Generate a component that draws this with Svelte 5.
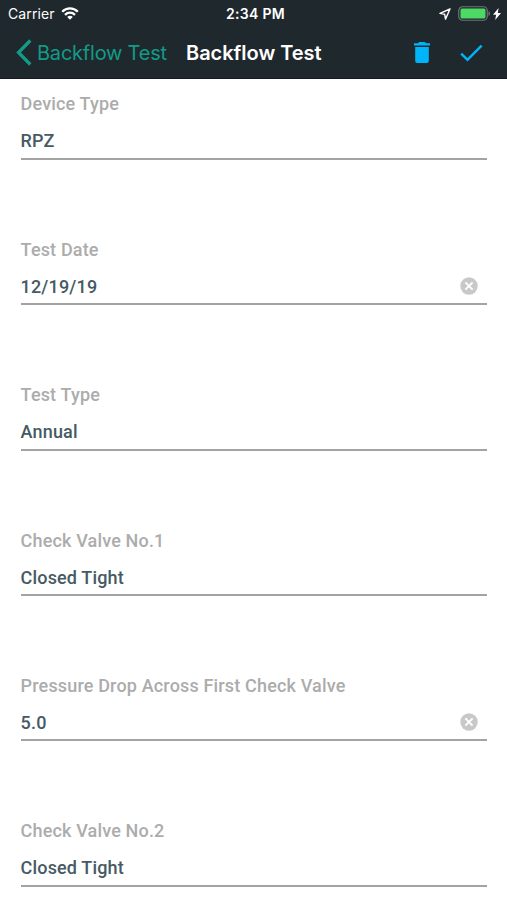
<script>
  const fields = [
    { label: 'Device Type', value: 'RPZ' },
    { label: 'Test Date', value: '12/19/19', clearable: true },
    { label: 'Test Type', value: 'Annual' },
    { label: 'Check Valve No.1', value: 'Closed Tight' },
    { label: 'Pressure Drop Across First Check Valve', value: '5.0', clearable: true },
    { label: 'Check Valve No.2', value: 'Closed Tight' }
  ];
</script>

<div class="screen">
  <header>
    <div class="status">
      <div class="carrier">
        <span>Carrier</span>
        <svg width="18" height="13" viewBox="0 0 18 13" fill="none" stroke="#fff" stroke-width="2.3">
          <path d="M1.2 4.7C5.7.3 12.3.3 16.8 4.7" />
          <path d="M4 7.8c2.9-2.8 7.1-2.8 10 0" />
          <path d="M6.2 9.9c1.7-1.5 3.9-1.5 5.6 0L9 12.7z" fill="#fff" stroke="none" />
        </svg>
      </div>
      <span class="time">2:34 PM</span>
      <div class="power">
        <svg class="location" width="12" height="12" viewBox="0 0 12 12" fill="none" stroke="#fff" stroke-width="1.4" stroke-linejoin="round">
          <path d="M11 1 1 5.4l4.7.9.8 4.8z" />
        </svg>
        <svg width="33" height="15" viewBox="0 0 33 15">
          <rect x=".75" y=".75" width="28.5" height="13.5" rx="3.8" fill="none" stroke="#6e7678" stroke-width="1.2" />
          <rect x="2.5" y="2.5" width="25" height="10" rx="1.5" fill="#4cd964" />
          <path d="M30.5 5c2.1.7 2.1 4.3 0 5z" fill="#6e7678" />
        </svg>
        <svg class="bolt" width="8" height="12" viewBox="0 0 8 12" fill="#fff">
          <path d="M5.6 0 0 6.7h3.1L2.2 12 8 5H4.8z" />
        </svg>
      </div>
    </div>
    <nav>
      <button class="back">
        <svg width="16" height="27" viewBox="0 0 16 27" fill="none" stroke="#129b87" stroke-width="3.3">
          <path d="M14.3 1.5 2.5 13.5l11.8 12" />
        </svg>
        <span>Backflow Test</span>
      </button>
      <h1>Backflow Test</h1>
      <div class="actions">
        <button aria-label="Delete">
          <svg width="16" height="21" viewBox="0 0 16 21" fill="#00b4fa">
            <path d="M0 1.2h4L5.2 0h5.6L12 1.2h4v2.4H0zM1.2 5h13.6v13.7c0 1.3-.9 2.3-2.2 2.3H3.4c-1.3 0-2.2-1-2.2-2.3z" />
          </svg>
        </button>
        <button aria-label="Save">
          <svg width="23" height="18" viewBox="0 0 23 18" fill="none" stroke="#00b4fa" stroke-width="2.5">
            <path d="m1.2 9.6 6.3 6.2L21.6 1.6" />
          </svg>
        </button>
      </div>
    </nav>
  </header>
  <main>
    {#each fields as field}
      <section>
        <div class="label">{field.label}</div>
        <div class="value">
          <span>{field.value}</span>
          {#if field.clearable}
            <button aria-label="Clear">
              <svg width="18" height="18" viewBox="0 0 18 18">
                <circle cx="9" cy="9" r="8.7" fill="#c8c8c8" />
                <path d="m5.4 5.4 7.2 7.2m0-7.2-7.2 7.2" stroke="#fff" stroke-width="2" />
              </svg>
            </button>
          {/if}
        </div>
      </section>
    {/each}
  </main>
</div>

<style>
  :global(body) { background: #fff; overflow: hidden; }
  .screen { height: 900px; overflow: hidden; background: #fff; font-family: Roboto, sans-serif; }
  svg { display: block; flex: none; }
  button { display: flex; align-items: center; padding: 0; border: 0; background: none; font: inherit; color: inherit; }
  header { height: 79px; box-sizing: border-box; background: #1f282d; border-bottom: 1px solid #10191d; font-family: Inter, sans-serif; color: #fff; white-space: nowrap; }
  .status { display: grid; grid-template-columns: 1fr auto 1fr; align-items: center; height: 27px; padding: 0 6px 0 8px; font-size: 14px; }
  .carrier { display: flex; align-items: center; gap: 6px; letter-spacing: .1px; }
  .time { position: relative; left: 1px; font-weight: 600; letter-spacing: .3px; }
  .power { display: flex; align-items: center; justify-content: flex-end; }
  .location { margin-right: 7px; }
  .bolt { margin-left: 2px; }
  nav { display: flex; align-items: center; height: 51px; padding: 0 24px 0 16px; font-size: 20px; }
  .back { width: 170px; gap: 5px; color: #129b87; letter-spacing: -.22px; }
  h1 { margin: 0; font-size: 20px; font-weight: 600; letter-spacing: -.03px; }
  .actions { display: flex; align-items: center; gap: 30px; margin-left: auto; }
  main { padding: 13.4px 20px 0 20.6px; }
  section { height: 145.4px; }
  .label, .value { font-size: 18px; font-weight: 500; letter-spacing: .16px; white-space: nowrap; }
  .label { height: 24px; line-height: 23.6px; color: #acacac; }
  .value { display: flex; align-items: center; justify-content: space-between; height: 43.4px; box-sizing: border-box; padding: 7.6px 9px 0 0; border-bottom: 2px solid #a3a3a3; color: #465a64; }
</style>
